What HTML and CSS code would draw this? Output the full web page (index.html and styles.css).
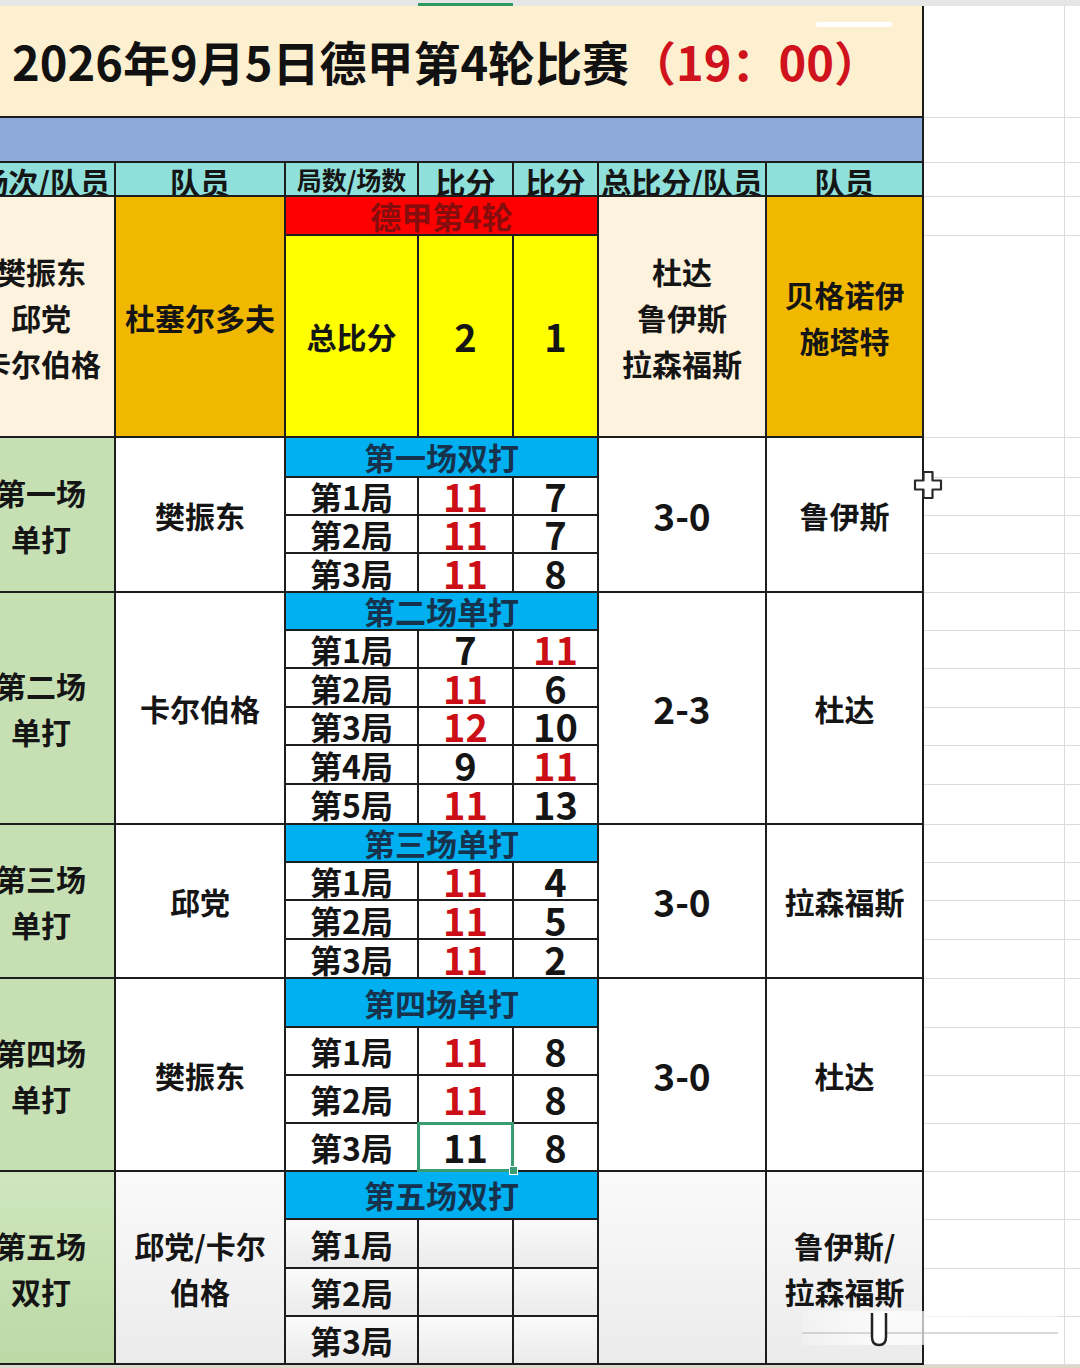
FILE: index.html
```html
<!DOCTYPE html>
<html lang="zh-CN">
<head>
<meta charset="utf-8">
<title>2026年9月5日德甲第4轮比赛</title>
<link rel="stylesheet" href="styles.css">
</head>
<body>
<div class="sheet">
  <div class="toolbar"><span class="tab-line"></span></div>
  <table class="grid">
    <colgroup>
      <col class="c1"><col class="c2"><col class="c3"><col class="c4"><col class="c5"><col class="c6"><col class="c7"><col class="c8"><col class="c9">
    </colgroup>
    <tbody>
      <tr class="h111">
        <td class="title" colspan="7"><span class="title-main">2026年9月5日德甲第4轮比赛</span><span class="title-time">（19：00）</span></td>
        <td class="x x-top"></td><td class="x x-top"></td>
      </tr>
      <tr class="h45"><td class="band" colspan="7"></td><td class="x"></td><td class="x"></td></tr>
      <tr class="h34">
        <th class="hd hd-first"><span>场次/队员</span></th>
        <th class="hd"><span>队员</span></th>
        <th class="hd hd-small"><span>局数/场数</span></th>
        <th class="hd"><span>比分</span></th>
        <th class="hd"><span>比分</span></th>
        <th class="hd"><span>总比分/队员</span></th>
        <th class="hd"><span>队员</span></th>
        <td class="x"></td><td class="x"></td>
      </tr>
      <tr class="h39">
        <td class="cream names" rowspan="2">樊振东<br>邱党<br>卡尔伯格</td>
        <td class="orange names" rowspan="2">杜塞尔多夫</td>
        <td class="red-head" colspan="3">德甲第4轮</td>
        <td class="cream names" rowspan="2">杜达<br>鲁伊斯<br>拉森福斯</td>
        <td class="orange names" rowspan="2">贝格诺伊<br>施塔特</td>
        <td class="x"></td><td class="x"></td>
      </tr>
      <tr class="h202">
        <td class="yellow names">总比分</td>
        <td class="yellow pt">2</td>
        <td class="yellow pt">1</td>
        <td class="x"></td><td class="x"></td>
      </tr>

      <tr class="h40">
        <td class="green names" rowspan="4">第一场<br>单打</td>
        <td class="white names" rowspan="4">樊振东</td>
        <td class="mhead" colspan="3">第一场双打</td>
        <td class="white total" rowspan="4">3-0</td>
        <td class="white names" rowspan="4">鲁伊斯</td>
        <td class="x"></td><td class="x"></td>
      </tr>
      <tr class="h38"><td class="game">第1局</td><td class="pt win">11</td><td class="pt">7</td><td class="x"></td><td class="x"></td></tr>
      <tr class="h38"><td class="game">第2局</td><td class="pt win">11</td><td class="pt">7</td><td class="x"></td><td class="x"></td></tr>
      <tr class="h39"><td class="game">第3局</td><td class="pt win">11</td><td class="pt">8</td><td class="x"></td><td class="x"></td></tr>

      <tr class="h38">
        <td class="green names" rowspan="6">第二场<br>单打</td>
        <td class="white names" rowspan="6">卡尔伯格</td>
        <td class="mhead" colspan="3">第二场单打</td>
        <td class="white total" rowspan="6">2-3</td>
        <td class="white names" rowspan="6">杜达</td>
        <td class="x"></td><td class="x"></td>
      </tr>
      <tr class="h38"><td class="game">第1局</td><td class="pt">7</td><td class="pt win">11</td><td class="x"></td><td class="x"></td></tr>
      <tr class="h39"><td class="game">第2局</td><td class="pt win">11</td><td class="pt">6</td><td class="x"></td><td class="x"></td></tr>
      <tr class="h38"><td class="game">第3局</td><td class="pt win">12</td><td class="pt">10</td><td class="x"></td><td class="x"></td></tr>
      <tr class="h39"><td class="game">第4局</td><td class="pt">9</td><td class="pt win">11</td><td class="x"></td><td class="x"></td></tr>
      <tr class="h40"><td class="game">第5局</td><td class="pt win">11</td><td class="pt">13</td><td class="x"></td><td class="x"></td></tr>

      <tr class="h38">
        <td class="green names" rowspan="4">第三场<br>单打</td>
        <td class="white names" rowspan="4">邱党</td>
        <td class="mhead" colspan="3">第三场单打</td>
        <td class="white total" rowspan="4">3-0</td>
        <td class="white names" rowspan="4">拉森福斯</td>
        <td class="x"></td><td class="x"></td>
      </tr>
      <tr class="h38"><td class="game">第1局</td><td class="pt win">11</td><td class="pt">4</td><td class="x"></td><td class="x"></td></tr>
      <tr class="h39"><td class="game">第2局</td><td class="pt win">11</td><td class="pt">5</td><td class="x"></td><td class="x"></td></tr>
      <tr class="h39"><td class="game">第3局</td><td class="pt win">11</td><td class="pt">2</td><td class="x"></td><td class="x"></td></tr>

      <tr class="h49">
        <td class="green names" rowspan="4">第四场<br>单打</td>
        <td class="white names" rowspan="4">樊振东</td>
        <td class="mhead" colspan="3">第四场单打</td>
        <td class="white total" rowspan="4">3-0</td>
        <td class="white names" rowspan="4">杜达</td>
        <td class="x"></td><td class="x"></td>
      </tr>
      <tr class="h48"><td class="game">第1局</td><td class="pt win">11</td><td class="pt">8</td><td class="x"></td><td class="x"></td></tr>
      <tr class="h48"><td class="game">第2局</td><td class="pt win">11</td><td class="pt">8</td><td class="x"></td><td class="x"></td></tr>
      <tr class="h48"><td class="game">第3局</td><td class="pt sel">11</td><td class="pt">8</td><td class="x"></td><td class="x"></td></tr>

      <tr class="h48">
        <td class="green dim-green names" rowspan="4">第五场<br>双打</td>
        <td class="dim names" rowspan="4">邱党/卡尔<br>伯格</td>
        <td class="mhead" colspan="3">第五场双打</td>
        <td class="dim total" rowspan="4"></td>
        <td class="dim names" rowspan="4">鲁伊斯/<br>拉森福斯</td>
        <td class="x"></td><td class="x"></td>
      </tr>
      <tr class="h49"><td class="game dim">第1局</td><td class="pt dim"></td><td class="pt dim"></td><td class="x"></td><td class="x"></td></tr>
      <tr class="h48"><td class="game dim">第2局</td><td class="pt dim"></td><td class="pt dim"></td><td class="x"></td><td class="x"></td></tr>
      <tr class="h48"><td class="game dim">第3局</td><td class="pt dim"></td><td class="pt dim"></td><td class="x"></td><td class="x"></td></tr>
    </tbody>
  </table>

  <span class="glare"></span>
  <svg class="cursor" width="30" height="30" viewBox="0 0 30 30" aria-hidden="true">
    <polygon points="10.5,2 19.5,2 19.5,10.5 28,10.5 28,19.5 19.5,19.5 19.5,28 10.5,28 10.5,19.5 2,19.5 2,10.5 10.5,10.5" fill="#ffffff" stroke="#2a2a2a" stroke-width="2.2" stroke-linejoin="round"/>
  </svg>
  <div class="scroll-haze">
    <span class="scroll-line"></span>
    <svg class="scroll-knob" width="22" height="36" viewBox="0 0 22 36" aria-hidden="true">
      <path d="M4 2 V26 Q4 34 11 34 Q18 34 18 26 V2" fill="#ffffff" stroke="#222" stroke-width="2.5"/>
    </svg>
  </div>
</div>
</body>
</html>
```
FILE: styles.css
```css
html, body {
  margin: 0;
  padding: 0;
  background: #ffffff;
}
body {
  width: 1080px;
  height: 1368px;
  overflow: hidden;
  font-family: "Noto Sans CJK SC", "Noto Sans", sans-serif;
}
.sheet {
  position: relative;
  width: 1080px;
  height: 1368px;
  overflow: hidden;
  background: linear-gradient(#ffffff 1360px, #ddd8cc 1364px);
}
.toolbar {
  height: 6px;
  background: #e6e6e6;
  display: flex;
  align-items: flex-end;
}
.tab-line {
  margin-left: 418px;
  width: 95px;
  height: 3px;
  background: #2f9a62;
}
.grid {
  border-collapse: collapse;
  table-layout: fixed;
  width: 1197px;
  margin-left: -34px;
}
col.c1 { width: 148px; }
col.c2 { width: 170px; }
col.c3 { width: 133px; }
col.c4 { width: 95px; }
col.c5 { width: 85px; }
col.c6 { width: 168px; }
col.c7 { width: 157px; }
col.c8 { width: 141px; }
col.c9 { width: 100px; }

.h34 { height: 34px; }
.h38 { height: 38px; }
.h39 { height: 39px; }
.h40 { height: 40px; }
.h45 { height: 45px; }
.h48 { height: 48px; }
.h49 { height: 49px; }
.h111 { height: 111px; }
.h202 { height: 202px; }

td, th {
  padding: 0;
  border: 2px solid #1d1d1d;
  text-align: center;
  vertical-align: middle;
  font-weight: 700;
  color: #151515;
  font-size: 30px;
  line-height: 34px;
  white-space: nowrap;
}
.x {
  border: 1px solid #dcdcdc;
  background: #ffffff;
}
.x-top {
  border-top: none;
}

.title {
  background: #fcf0d1;
  border-top: none;
  border-left: none;
  text-align: left;
  padding-left: 45px;
  font-size: 47px;
  line-height: 60px;
  color: #111111;
}
.title-time {
  color: #d0121c;
}

.band {
  background: #8eaadb;
}

.hd {
  background: #8fe0da;
  font-weight: 700;
}
.hd span {
  display: flex;
  justify-content: center;
  height: 32px;
  overflow: hidden;
  line-height: 36px;
  font-size: 30px;
}
.hd-first span {
  justify-content: flex-end;
  padding-right: 4px;
}
.hd-small span {
  font-size: 25px;
  line-height: 32px;
}

.cream { background: #fdf2dd; }
.orange { background: #f1b800; }
.yellow { background: #ffff00; }
.green { background: #c6e0b4; }
.white { background: #ffffff; }
.dim { background: linear-gradient(#fafafa, #ebebeb); }
.dim-green { background: linear-gradient(#cfe6bd, #bcd9a6); }

.names {
  font-size: 30px;
  line-height: 46px;
}
.red-head {
  background: #ff0000;
  color: #850d0d;
  font-size: 31px;
  line-height: 34px;
}
.mhead {
  background: #00b0f0;
  color: #17324d;
  font-size: 31px;
  line-height: 34px;
}
.game {
  font-size: 32px;
  line-height: 34px;
}
.pt {
  font-size: 38px;
  line-height: 36px;
}
.win {
  color: #cc0f16;
}
.total {
  font-size: 37px;
  line-height: 40px;
}
.sel {
  position: relative;
  outline: 3px solid #3a9c72;
  outline-offset: -2px;
}
.sel::after {
  content: "";
  position: absolute;
  right: -6px;
  bottom: -5px;
  width: 7px;
  height: 7px;
  background: #3a9c72;
  border: 1px solid #ffffff;
}

.glare {
  position: absolute;
  left: 816px;
  top: 22px;
  width: 76px;
  height: 5px;
  background: #ffffff;
  border-radius: 2px;
}
.cursor {
  position: absolute;
  left: 913px;
  top: 470px;
}
.scroll-haze {
  position: absolute;
  left: 802px;
  top: 1311px;
  width: 256px;
  height: 34px;
  background: linear-gradient(90deg, rgba(255,255,255,0.2), rgba(255,255,255,0.75) 30%, rgba(255,255,255,0.5));
}
.scroll-line {
  position: absolute;
  left: 0;
  top: 21px;
  width: 256px;
  height: 2px;
  background: rgba(190,190,190,0.6);
}
.scroll-knob {
  position: absolute;
  left: 66px;
  top: 0px;
}
```
